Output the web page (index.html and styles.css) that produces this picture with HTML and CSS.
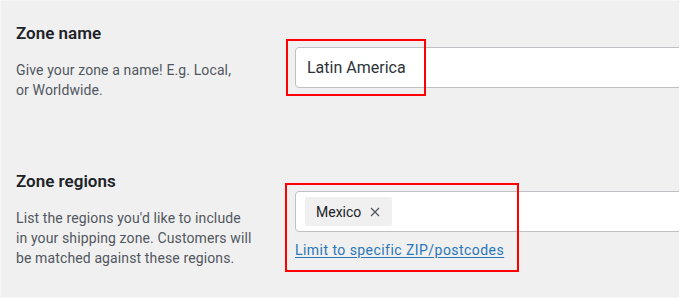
FILE: index.html
```html
<!DOCTYPE html>
<html lang="en">
<head>
<meta charset="utf-8">
<title>Shipping zone</title>
<link rel="stylesheet" href="styles.css">
</head>
<body>
<div class="frame">
  <div class="row row-name">
    <div class="label-col">
      <h2 class="title">Zone name</h2>
      <p class="desc desc-narrow">Give your zone a name! E.g. Local, or Worldwide.</p>
    </div>
    <div class="field">
      <div class="input"><span class="input-text">Latin America</span></div>
    </div>
  </div>
  <div class="row row-regions">
    <div class="label-col">
      <h2 class="title">Zone regions</h2>
      <p class="desc">List the regions you'd like to include in your shipping zone. Customers will be matched against these regions.</p>
    </div>
    <div class="field">
      <div class="input input-chips">
        <span class="chip">Mexico
          <svg class="chip-x" width="10" height="10" viewBox="0 0 10 10" aria-hidden="true"><path d="M1 1 L9 9 M9 1 L1 9" stroke="#50575e" stroke-width="1.2" fill="none"/></svg>
        </span>
      </div>
      <a class="link" href="#">Limit to specific ZIP/postcodes</a>
    </div>
  </div>
  <div class="mark mark-name"></div>
  <div class="mark mark-regions"></div>
</div>
</body>
</html>
```
FILE: styles.css
```css
html, body {
  margin: 0;
  padding: 0;
  background: #f0f0f0;
}
.frame {
  position: relative;
  width: 680px;
  height: 298px;
  overflow: hidden;
  box-sizing: border-box;
  padding: 21px 0 0 16px;
  background: #f0f0f0;
  font-family: Roboto, "Noto Sans", sans-serif;
  color: #1d2327;
}
.frame::after {
  content: "";
  position: absolute;
  inset: 0;
  border: 1px solid #f7f7f7;
  border-right-color: #fdfdfd;
  pointer-events: none;
}
.row {
  display: grid;
  grid-template-columns: 279px 1fr;
  height: 148px;
}
.title {
  margin: 0 0 14.5px;
  font-size: 17px;
  font-weight: 600;
  line-height: 24px;
  color: #1d2327;
}
.desc {
  margin: 0;
  max-width: 237px;
  font-size: 14px;
  line-height: 20px;
  letter-spacing: 0.12px;
  color: #50575e;
}
.desc-narrow {
  max-width: 225px;
}
.row-name .field {
  margin-top: 26px;
}
.row-regions .field {
  margin-top: 22px;
}
.input {
  box-sizing: border-box;
  width: 420px;
  height: 41px;
  display: flex;
  align-items: center;
  padding: 0 11px;
  background: #fff;
  border: 1px solid #bfc0c3;
  border-radius: 4px;
}
.input-text {
  font-size: 16px;
  color: #2c3338;
}
.input-chips {
  padding: 0 9px;
}
.chip {
  display: inline-flex;
  align-items: center;
  gap: 9px;
  height: 29px;
  box-sizing: border-box;
  padding: 0 12px 0 11px;
  background: #f0f0f0;
  border-radius: 2px;
  font-size: 14px;
  color: #1d2327;
}
.chip-x {
  display: block;
}
.link {
  display: inline-block;
  margin-top: 8px;
  font-size: 14px;
  line-height: 20px;
  letter-spacing: 0.45px;
  color: #2a76b8;
  text-decoration: underline;
  text-underline-offset: 2px;
}
.mark {
  position: absolute;
  box-sizing: border-box;
  border: 2px solid #ff0000;
}
.mark-name {
  left: 286px;
  top: 39px;
  width: 140px;
  height: 57px;
}
.mark-regions {
  left: 285px;
  top: 183px;
  width: 234px;
  height: 89px;
}
```
